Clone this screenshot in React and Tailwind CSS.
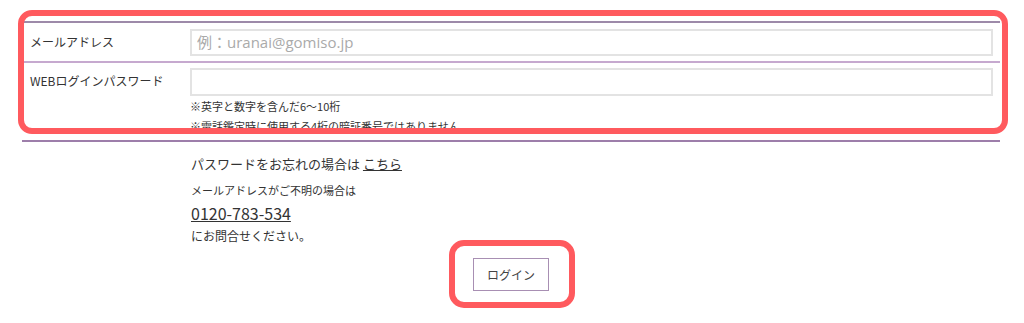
const Row = ({ label, children, className = '' }) => (
  <div className={`flex ${className}`}>
    <div className="w-[168px] shrink-0 pl-[8px] text-[12px] text-[#333]">{label}</div>
    <div className="flex-1 pr-[7px]">{children}</div>
  </div>
);

const App = () => {
  return (
    <div
      className="relative w-[1024px] h-[323px] bg-white text-[#333]"
      style={{ fontFamily: '"Noto Sans CJK JP", "Noto Sans", sans-serif' }}
    >
      <div className="ml-[22px] w-[978px] pt-[21px]">
        {/* form table */}
        <div className="border-t-2 border-[#9d8aa9]">
          <Row label={<div className="h-[38px] flex items-center">メールアドレス</div>} className="border-b-2 border-[#c6a9cf]">
            <div className="h-[38px] flex items-center">
              <input
                readOnly
                placeholder="例：uranai@gomiso.jp"
                className="w-full h-[27px] border-2 border-[#e3e3e3] px-[5px] text-[15px] placeholder:text-[#aaa] outline-none"
                style={{ fontFamily: '"Open Sans", "Noto Sans CJK JP", sans-serif' }}
              />
            </div>
          </Row>
          <Row label={<div className="pt-[9px]">WEBログインパスワード</div>}>
            <div className="pt-[5px] h-[77px]">
              <input
                readOnly
                type="password"
                className="w-full h-[28px] border-2 border-[#e3e3e3] px-[5px] text-[14px] outline-none"
              />
              <p className="text-[11px] leading-[20px]">※英字と数字を含んだ6〜10桁</p>
              <p className="text-[11px] leading-[20px]">※電話鑑定時に使用する4桁の暗証番号ではありません。</p>
            </div>
          </Row>
        </div>
        <div className="border-t-2 border-[#9d7eaa]" />

        {/* help text */}
        <div className="pl-[169px] pt-[12px]">
          <p className="text-[13px] leading-[20px]">
            パスワードをお忘れの場合は{' '}
            <a href="#" className="underline">こちら</a>
          </p>
          <p className="mt-[6px] text-[11px] leading-[20px]">メールアドレスがご不明の場合は</p>
          <p className="mt-[3px] text-[16px] leading-[20px]">
            <a href="#" className="underline">0120-783-534</a>
          </p>
          <p className="mt-[3px] text-[12px] leading-[20px]">にお問合せください。</p>
        </div>

        <div className="flex justify-center pt-[12px]">
          <button className="w-[76px] h-[33px] border border-[#a88fb3] bg-white text-[12px] text-[#444]">
            ログイン
          </button>
        </div>
      </div>

      {/* annotation outlines */}
      <div className="absolute left-[18px] top-[10px] w-[990px] h-[124px] border-[6px] border-[#ff5a5e] rounded-[14px] pointer-events-none" />
      <div className="absolute left-[449px] top-[240px] w-[126px] h-[68px] border-[6px] border-[#ff5a5e] rounded-[15px] pointer-events-none" />
    </div>
  );
};

export default App;
